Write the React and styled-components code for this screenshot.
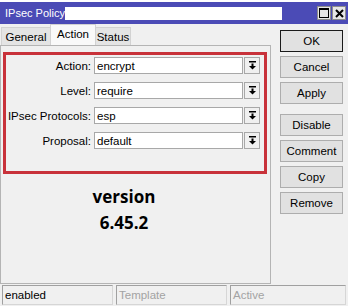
import React from 'react';
import styled, { createGlobalStyle } from 'styled-components';

const GlobalStyle = createGlobalStyle`
  *, *::before, *::after { box-sizing: border-box; }
  html, body { margin: 0; padding: 0; background: #f0f0f0; }
  body {
    font-family: 'Liberation Sans', Arial, sans-serif;
    font-size: 11.5px;
    color: #000;
  }
`;

const Window = styled.div`
  width: 348px;
  height: 306px;
  display: grid;
  grid-template-rows: 24px 1fr 21px;
  background: #f0f0f0;
  overflow: hidden;
`;

const TitleBar = styled.div`
  border-top: 2px solid #fff;
  background: #4b4bb6;
  display: flex;
  align-items: center;
  padding: 0 2px 0 5px;
`;

const Title = styled.span`
  color: #fff;
  font-size: 11px;
  width: 60px;
  flex: none;
  white-space: nowrap;
`;

const TitleField = styled.div`
  width: 217px;
  height: 13px;
  flex: none;
  background: #fff;
`;

const TitleButtons = styled.div`
  margin-left: auto;
  display: flex;
  gap: 1px;
`;

const TitleButton = styled.div`
  width: 14px;
  height: 14px;
  background: #e6e6e6;
  border: 1px solid #8c8c8c;
  display: flex;
  align-items: center;
  justify-content: center;
`;

const Main = styled.div`
  display: grid;
  grid-template-columns: 271px 1fr;
  min-height: 0;
`;

const Left = styled.div`
  display: flex;
  flex-direction: column;
`;

const Tabs = styled.div`
  height: 21px;
  display: flex;
  align-items: flex-end;
  padding-left: 2px;
`;

const Tab = styled.div`
  width: ${({ w }) => w}px;
  height: ${({ active }) => (active ? 21 : 18)}px;
  background: ${({ active }) => (active ? '#f9f9f9' : '#e4e4e4')};
  border: 1px solid #d2d2d2;
  border-bottom: none;
  margin-left: -1px;
  display: flex;
  align-items: center;
  justify-content: center;
  padding-bottom: ${({ active }) => (active ? 3 : 0)}px;
`;

const Panel = styled.div`
  flex: 1;
  width: 271px;
  margin-bottom: 1px;
  border: 1px solid #b4b4b4;
  display: flex;
  flex-direction: column;
  padding: 6px 3px 0 2px;
`;

const Highlight = styled.div`
  border: 3px solid #c8323a;
  padding: 2px 0 22px 0;
  display: flex;
  flex-direction: column;
  gap: 8px;
`;

const Row = styled.div`
  display: flex;
  align-items: center;
  height: 17px;
`;

const Label = styled.div`
  width: 85px;
  text-align: right;
`;

const Field = styled.div`
  width: 149px;
  height: 17px;
  margin-left: 3px;
  background: #fff;
  border: 1px solid #a8a8a8;
  display: flex;
  align-items: center;
  padding-left: 2px;
`;

const DropButton = styled.div`
  width: 16px;
  height: 17px;
  margin-left: 1px;
  border: 1px solid #a8a8a8;
  background: #f0f0f0;
  display: flex;
  align-items: center;
  justify-content: center;
`;

const Version = styled.div`
  margin-top: 10px;
  padding-right: 22px;
  text-align: center;
  font-family: 'Open Sans', 'Noto Sans', sans-serif;
  font-weight: 700;
  font-size: 17px;
  line-height: 26px;
`;

const Buttons = styled.div`
  padding: 6px 0 0 9px;
  display: flex;
  flex-direction: column;
  gap: 4px;
`;

const Button = styled.div`
  width: 63px;
  height: 22px;
  background: #e1e1e1;
  border: 1px solid ${({ primary }) => (primary ? '#1a1a1a' : '#adadad')};
  display: flex;
  align-items: center;
  justify-content: center;
  margin-top: ${({ spaced }) => (spaced ? 6 : 0)}px;
`;

const StatusBar = styled.div`
  display: grid;
  grid-template-columns: 111px 111px 1fr;
  column-gap: 3px;
  padding: 0 2px 1px 2px;
`;

const StatusField = styled.div`
  border: 1px solid #d6d6d6;
  border-top-color: #a0a0a0;
  border-left-color: #a0a0a0;
  color: ${({ muted }) => (muted ? '#a3a3a3' : '#000')};
  display: flex;
  align-items: center;
  padding-left: 2px;
`;

const DropIcon = () => (
  <svg width="7" height="9" viewBox="0 0 7 9">
    <rect x="0" y="0" width="7" height="1.5" fill="#000" />
    <rect x="2.5" y="2.5" width="2" height="3" fill="#000" />
    <polygon points="0,5 7,5 3.5,8.5" fill="#000" />
  </svg>
);

const rows = [
  { label: 'Action:', value: 'encrypt' },
  { label: 'Level:', value: 'require' },
  { label: 'IPsec Protocols:', value: 'esp' },
  { label: 'Proposal:', value: 'default' },
];

const buttons = ['OK', 'Cancel', 'Apply', 'Disable', 'Comment', 'Copy', 'Remove'];

const App = () => (
  <Window>
    <GlobalStyle />
    <TitleBar>
      <Title>IPsec Policy</Title>
      <TitleField />
      <TitleButtons>
        <TitleButton>
          <svg width="10" height="10" viewBox="0 0 10 10">
            <rect x="0.5" y="0.5" width="9" height="9" fill="none" stroke="#000" />
            <rect x="0.5" y="0.5" width="9" height="1.5" fill="#000" />
          </svg>
        </TitleButton>
        <TitleButton>
          <svg width="9" height="9" viewBox="0 0 9 9">
            <path d="M1 1 L8 8 M8 1 L1 8" stroke="#000" strokeWidth="2" />
          </svg>
        </TitleButton>
      </TitleButtons>
    </TitleBar>

    <Main>
      <Left>
        <Tabs>
          <Tab w={50}>General</Tab>
          <Tab w={46} active>Action</Tab>
          <Tab w={36}>Status</Tab>
        </Tabs>
        <Panel>
          <Highlight>
            {rows.map((row) => (
              <Row key={row.label}>
                <Label>{row.label}</Label>
                <Field>{row.value}</Field>
                <DropButton><DropIcon /></DropButton>
              </Row>
            ))}
          </Highlight>
          <Version>
            <div>version</div>
            <div>6.45.2</div>
          </Version>
        </Panel>
      </Left>
      <Buttons>
        {buttons.map((label) => (
          <Button key={label} primary={label === 'OK'} spaced={label === 'Disable'}>
            {label}
          </Button>
        ))}
      </Buttons>
    </Main>

    <StatusBar>
      <StatusField>enabled</StatusField>
      <StatusField muted>Template</StatusField>
      <StatusField muted>Active</StatusField>
    </StatusBar>
  </Window>
);

export default App;
